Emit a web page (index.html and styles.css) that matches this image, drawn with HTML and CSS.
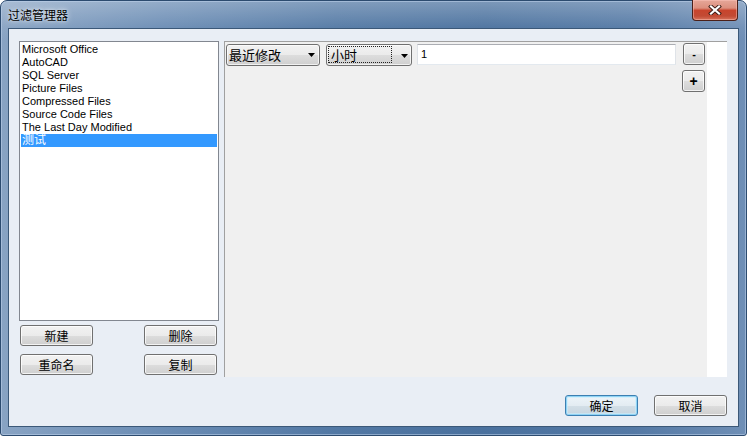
FILE: index.html
```html
<!DOCTYPE html>
<html lang="zh">
<head>
<meta charset="utf-8">
<title>过滤管理器</title>
<link rel="stylesheet" href="styles.css">
</head>
<body>
<div class="window">
  <div class="titlebar">
    <span class="title">过滤管理器</span>
    <button class="close" aria-label="关闭">
      <svg width="14" height="10" viewBox="0 0 14 10">
        <path d="M3 1.5 L11 8.5 M11 1.5 L3 8.5" stroke="#3b1c16" stroke-width="4" stroke-linecap="square" fill="none"/>
        <path d="M3 1.5 L11 8.5 M11 1.5 L3 8.5" stroke="#ffffff" stroke-width="2.2" stroke-linecap="square" fill="none"/>
      </svg>
    </button>
  </div>
  <div class="client">
    <div class="main">
      <div class="left">
        <ul class="list">
          <li>Microsoft Office</li>
          <li>AutoCAD</li>
          <li>SQL Server</li>
          <li>Picture Files</li>
          <li>Compressed Files</li>
          <li>Source Code Files</li>
          <li>The Last Day Modified</li>
          <li class="selected cjk">测试</li>
        </ul>
        <div class="btn-row">
          <button class="btn">新建</button>
          <button class="btn">删除</button>
        </div>
        <div class="btn-row">
          <button class="btn">重命名</button>
          <button class="btn">复制</button>
        </div>
      </div>
      <div class="panel">
        <div class="rules">
          <div class="rule-row">
            <div class="combo combo-field">
              <span class="combo-text">最近修改</span>
              <svg class="arrow" width="7" height="4" viewBox="0 0 7 4"><polygon points="0,0 7,0 3.5,4" fill="#000"/></svg>
            </div>
            <div class="combo combo-unit">
              <span class="combo-text focus-rect">小时</span>
              <svg class="arrow" width="7" height="4" viewBox="0 0 7 4"><polygon points="0,0 7,0 3.5,4" fill="#000"/></svg>
            </div>
            <div class="edit">1</div>
            <button class="btn small minus">-</button>
          </div>
          <div class="add-row">
            <button class="btn small plus">+</button>
          </div>
        </div>
        <div class="gutter"></div>
      </div>
    </div>
    <div class="footer">
      <button class="btn default">确定</button>
      <button class="btn">取消</button>
    </div>
  </div>
</div>
</body>
</html>
```
FILE: styles.css
```css
* {
  box-sizing: border-box;
}

html, body {
  margin: 0;
  padding: 0;
  background: #ffffff;
}

body {
  width: 747px;
  height: 436px;
  overflow: hidden;
  font-family: "Liberation Sans", "Noto Sans CJK SC", sans-serif;
  font-size: 11px;
  color: #000;
}

.window {
  width: 747px;
  height: 436px;
  border: 1px solid #2c4b6f;
  border-radius: 7px 7px 3px 3px;
  padding: 0 7px 8px 7px;
  display: flex;
  flex-direction: column;
  background:
    linear-gradient(to bottom, rgba(255,255,255,0.28) 0px, rgba(255,255,255,0.05) 26px, rgba(255,255,255,0) 40px),
    linear-gradient(to right, #88a3c3 0%, #6a8cb4 22%, #5278a4 45%, #4a719e 65%, #5479a5 85%, #6f8fb6 100%);
  box-shadow: inset 0 0 0 1px rgba(190, 210, 235, 0.55);
}

.titlebar {
  height: 27px;
  flex: none;
  display: flex;
  align-items: flex-start;
}

.title {
  font-family: "Noto Sans CJK SC", sans-serif;
  font-size: 12px;
  line-height: 27px;
  color: #000;
  text-shadow: 0 0 6px rgba(255, 255, 255, 0.8), 0 0 3px rgba(255, 255, 255, 0.6);
}

.close {
  margin-left: auto;
  margin-right: 1px;
  margin-top: -1px;
  width: 46px;
  height: 21px;
  padding: 0;
  border: 1px solid #4b2019;
  border-top: none;
  border-radius: 0 0 4px 4px;
  background: linear-gradient(to bottom, #e6a799 0%, #dc8f7e 40%, #c8442d 52%, #c24a34 80%, #d8735c 100%);
  box-shadow: inset 0 0 0 1px rgba(255, 200, 190, 0.45);
  display: flex;
  align-items: center;
  justify-content: center;
}

.close svg {
  display: block;
}

.client {
  flex: 1;
  background: #e9eef5;
  border: 1px solid #3b5878;
  padding: 12px 11px 10px 10px;
  display: flex;
  flex-direction: column;
}

.main {
  height: 336px;
  flex: none;
  display: flex;
  gap: 5px;
}

.left {
  width: 200px;
  display: flex;
  flex-direction: column;
}

.list {
  list-style: none;
  margin: 0;
  padding: 1px;
  height: 280px;
  background: #ffffff;
  border: 1px solid #828790;
}

.list li {
  height: 13px;
  line-height: 13px;
  padding-left: 1px;
  white-space: nowrap;
}

.list li.cjk {
  font-size: 12px;
}

.list li.selected {
  background: #3399ff;
  color: #ffffff;
}

.btn-row {
  display: flex;
  justify-content: space-between;
  padding: 0 2px 0 1px;
  margin-top: 4px;
}

.btn-row + .btn-row {
  margin-top: 8px;
}

.btn {
  width: 73px;
  height: 21px;
  padding: 0;
  border: 1px solid #707070;
  border-radius: 3px;
  background: linear-gradient(to bottom, #f2f2f2 0%, #ebebeb 50%, #dddddd 51%, #cfcfcf 100%);
  box-shadow: inset 0 0 0 1px rgba(255, 255, 255, 0.75);
  font-family: "Noto Sans CJK SC", sans-serif;
  font-size: 12px;
  line-height: 18px;
  color: #000;
}

.btn.default {
  border-color: #3c7fb1;
  background: linear-gradient(to bottom, #edf4f9 0%, #e3ecf2 50%, #d3dfe7 51%, #c6d5df 100%);
  box-shadow: inset 0 0 0 1px #8fd3f5, inset 0 0 0 2px rgba(200, 236, 252, 0.6);
}

.panel {
  width: 503px;
  display: flex;
  border-left: 1px solid #a0a0a0;
  border-top: 1px solid #a0a0a0;
  background: #ffffff;
}

.rules {
  width: 482px;
  background: #f0f0f0;
  display: flex;
  flex-direction: column;
}

.gutter {
  flex: 1;
  background: #ffffff;
}

.rule-row {
  display: flex;
  align-items: flex-start;
  padding: 1px 0 0 1px;
}

.combo {
  margin-top: 1px;
  height: 22px;
  border: 1px solid #707070;
  border-radius: 3px;
  background: linear-gradient(to bottom, #f2f2f2 0%, #ebebeb 50%, #dddddd 51%, #cfcfcf 100%);
  box-shadow: inset 0 0 0 1px rgba(255, 255, 255, 0.7);
  display: flex;
  align-items: center;
  font-family: "Noto Sans CJK SC", sans-serif;
  font-size: 13px;
}

.combo-field {
  width: 94px;
}

.combo-unit {
  width: 86px;
  margin-left: 6px;
  align-items: flex-start;
}

.combo-text {
  flex: 1;
  padding-left: 2px;
  line-height: 18px;
  white-space: nowrap;
}

.focus-rect {
  margin: 1px 0 0 1px;
  height: 17px;
  line-height: 15px;
  padding-left: 2px;
  border: 1px dotted #222;
  flex: none;
  width: 64px;
}

.arrow {
  flex: none;
  display: block;
  margin-right: 4px;
}

.combo-unit .arrow {
  margin: 9px 3px 0 auto;
}

.edit {
  margin-top: 1px;
  margin-left: 5px;
  width: 259px;
  height: 21px;
  background: #ffffff;
  border: 1px solid #dfe3e8;
  border-top-color: #abadb3;
  border-bottom-color: #e3e9ef;
  padding-left: 3px;
  line-height: 18px;
  font-size: 11px;
}

.btn.small {
  width: 22px;
  height: 22px;
  font-family: "Liberation Sans", sans-serif;
  font-weight: bold;
  line-height: 19px;
}

.minus {
  margin-left: 7px;
  font-size: 11px;
}

.add-row {
  display: flex;
  justify-content: flex-end;
  padding-right: 2px;
  margin-top: 4px;
}

.btn.plus {
  width: 23px;
  font-size: 14px;
}

.footer {
  margin-top: auto;
  display: flex;
  justify-content: flex-end;
  gap: 16px;
}
```
